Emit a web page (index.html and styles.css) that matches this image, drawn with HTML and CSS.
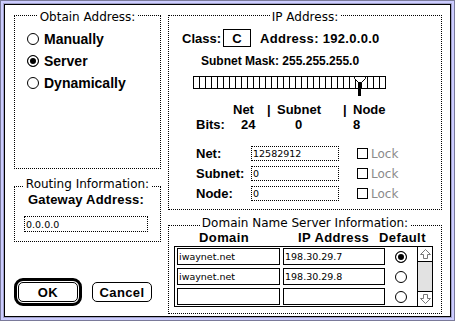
FILE: index.html
```html
<!DOCTYPE html>
<html lang="en">
<head>
  <meta charset="UTF-8">
  <meta name="viewport" content="width=device-width, initial-scale=1">
  <title>MacTCP</title>
  <link rel="stylesheet" href="styles.css">
</head>
<body>
  <div class="window">
    <div class="col-left">
      <div class="group obtain">
        <span class="group-title">Obtain Address:</span>
        <div class="radio-row"><span class="radio"></span>Manually</div>
        <div class="radio-row"><span class="radio on"></span>Server</div>
        <div class="radio-row"><span class="radio"></span>Dynamically</div>
      </div>

      <div class="group routing">
        <span class="group-title low">Routing Information:</span>
        <div class="gateway-label">Gateway Address:</div>
        <div class="field dotted gateway">0.0.0.0</div>
      </div>

      <div class="buttons">
        <div class="btn-default"><div class="btn">OK</div></div>
        <div class="btn">Cancel</div>
      </div>
    </div>

    <div class="col-right">
      <div class="group ip">
        <span class="group-title">IP Address:</span>
        <div class="class-row">
          <span>Class:</span>
          <span class="class-box">C</span>
          <span class="addr-text">Address: 192.0.0.0</span>
        </div>
        <div class="mask-row">Subnet Mask: 255.255.255.0</div>

        <div class="slider">
          <div class="slider-bar"></div>
          <svg class="thumb" width="12" height="20" viewBox="0 0 12 20">
            <polygon points="0.5,0.5 11.5,0.5 11.5,2.5 7.5,6.5 4.5,6.5 0.5,2.5" fill="#fff" stroke="#000" stroke-width="1"/>
            <rect x="4" y="6" width="3" height="14" fill="#000"/>
          </svg>
        </div>

        <div class="bits-head">
          <span class="w-net">Net</span>
          <span class="w-sep">|</span>
          <span class="w-subnet">Subnet</span>
          <span class="w-sep">|</span>
          <span>Node</span>
        </div>
        <div class="bits-row">
          <span class="w-bits">Bits:</span>
          <span class="w-24">24</span>
          <span class="w-0">0</span>
          <span>8</span>
        </div>

        <div class="addr-rows">
          <div class="addr-row">
            <span class="lbl">Net:</span>
            <div class="field dotted addr">12582912</div>
            <span class="check"></span>
            <span class="lock">Lock</span>
          </div>
          <div class="addr-row">
            <span class="lbl">Subnet:</span>
            <div class="field dotted addr">0</div>
            <span class="check"></span>
            <span class="lock">Lock</span>
          </div>
          <div class="addr-row">
            <span class="lbl">Node:</span>
            <div class="field dotted addr">0</div>
            <span class="check"></span>
            <span class="lock">Lock</span>
          </div>
        </div>
      </div>

      <div class="group dns">
        <span class="group-title low">Domain Name Server Information:</span>
        <div class="dns-head">
          <span class="w-domain">Domain</span>
          <span class="w-ip">IP Address</span>
          <span>Default</span>
        </div>
        <div class="dns-table">
          <div class="dns-rows">
            <div class="dns-row">
              <div class="field domain">iwaynet.net</div>
              <div class="field ipaddr">198.30.29.7</div>
              <div class="dns-default"><span class="radio on"></span></div>
            </div>
            <div class="dns-row">
              <div class="field domain">iwaynet.net</div>
              <div class="field ipaddr">198.30.29.8</div>
              <div class="dns-default"><span class="radio"></span></div>
            </div>
            <div class="dns-row">
              <div class="field domain"></div>
              <div class="field ipaddr"></div>
              <div class="dns-default"><span class="radio"></span></div>
            </div>
          </div>
          <div class="scroll">
            <div class="arrow up">
              <svg width="11" height="10" viewBox="0 0 11 10">
                <polygon points="5.5,0.5 10.5,5.5 7.5,5.5 7.5,9.5 3.5,9.5 3.5,5.5 0.5,5.5" fill="#fff" stroke="#777" stroke-width="1"/>
              </svg>
            </div>
            <div class="track"></div>
            <div class="arrow down">
              <svg width="11" height="10" viewBox="0 0 11 10">
                <polygon points="5.5,9.5 10.5,4.5 7.5,4.5 7.5,0.5 3.5,0.5 3.5,4.5 0.5,4.5" fill="#fff" stroke="#777" stroke-width="1"/>
              </svg>
            </div>
          </div>
        </div>
      </div>
    </div>
  </div>
</body>
</html>
```

FILE: styles.css
```css
body {
  margin: 0;
  background: #fff;
  overflow: hidden;
  font-family: 'Liberation Sans', Arial, sans-serif;
  font-weight: bold;
  font-size: 13px;
  color: #000;
}

.window {
  margin: 4px;
  width: 428px;
  height: 299px;
  padding: 10px 8px 2px 9px;
  border: 1px solid #000;
  background: #fff;
  box-shadow: 0 0 0 1px #a0a0c8, 0 0 0 3px #ccccff, 0 0 0 4px #7a7a9a;
  display: grid;
  grid-template-columns: 147px 274px;
  column-gap: 7px;
  align-items: start;
}

.col-left,
.col-right {
  display: flex;
  flex-direction: column;
}

/* group boxes */
.group {
  position: relative;
  border: 1px dotted #000;
  box-sizing: border-box;
}

.group-title {
  position: absolute;
  top: -5px;
  left: 0;
  right: 0;
  margin: 0 auto;
  width: fit-content;
  padding: 0 2px;
  background: #fff;
  font-family: 'DejaVu Sans', sans-serif;
  font-weight: normal;
  font-size: 12px;
  line-height: 12px;
  white-space: nowrap;
}

.group-title.low {
  top: -9px;
}

/* obtain address */
.obtain {
  height: 154px;
  padding-top: 12px;
}

.radio-row {
  display: flex;
  align-items: center;
  height: 22px;
  padding-left: 12px;
  font-size: 14px;
}

.radio {
  width: 12px;
  height: 12px;
  flex: none;
  box-sizing: border-box;
  border: 1px solid #000;
  border-radius: 50%;
  background: #fff;
  margin-right: 5px;
}

.radio.on {
  background: #000;
  box-shadow: inset 0 0 0 2px #fff;
}

/* routing */
.routing {
  margin-top: 17px;
  height: 56px;
  padding: 5px 12px 9px 9px;
}

.gateway-label {
  text-align: center;
  line-height: 15px;
  letter-spacing: 0.2px;
}

.field {
  box-sizing: border-box;
  border: 1px solid #000;
  background: #fff;
  display: flex;
  align-items: center;
  padding-left: 1px;
  font-family: 'DejaVu Sans', sans-serif;
  font-weight: normal;
  font-size: 9.5px;
  white-space: nowrap;
  overflow: hidden;
}

.field.dotted {
  border-style: dotted;
}

.gateway {
  margin-top: 9px;
  height: 16px;
}

/* buttons */
.buttons {
  margin-top: 36px;
  display: flex;
  align-items: center;
  gap: 10px;
}

.btn-default {
  border: 3px solid #000;
  border-radius: 9px;
  padding: 1px;
}

.btn {
  width: 60px;
  height: 20px;
  box-sizing: border-box;
  border: 1px solid #000;
  border-radius: 5px;
  display: flex;
  align-items: center;
  justify-content: center;
  font-size: 13px;
  letter-spacing: 0.4px;
}

/* ip address */
.ip {
  height: 195px;
  padding-top: 13px;
}

.class-row {
  display: flex;
  align-items: center;
  height: 18px;
  padding-left: 13px;
}

.class-box {
  width: 28px;
  height: 18px;
  box-sizing: border-box;
  border: 1px solid #000;
  margin: 0 9px 0 2px;
  display: flex;
  align-items: center;
  justify-content: center;
}

.addr-text {
  letter-spacing: 0.3px;
}

.mask-row {
  margin-top: 7px;
  padding-left: 32px;
  font-size: 12px;
  line-height: 15px;
}

.slider {
  position: relative;
  margin: 7px 0 0 24px;
  width: 193px;
  height: 20px;
}

.slider-bar {
  margin-top: 7px;
  height: 13px;
  box-sizing: border-box;
  border-top: 1px solid #000;
  border-bottom: 1px solid #000;
  background: linear-gradient(to right, #000 1px, transparent 1px) 0 0 / 6px 100% repeat-x;
}

.thumb {
  position: absolute;
  top: 0;
  left: 161px;
}

.bits-head,
.bits-row {
  display: flex;
  line-height: 15px;
}

.bits-head {
  margin-top: 6px;
  padding-left: 64px;
}

.bits-row {
  padding-left: 27px;
}

.w-net { width: 34px; }
.w-sep { width: 10px; }
.w-subnet { width: 66px; }
.w-bits { width: 45px; }
.w-24 { width: 54px; }
.w-0 { width: 58px; }

.addr-rows {
  margin-top: 14px;
  display: flex;
  flex-direction: column;
  gap: 5px;
}

.addr-row {
  display: flex;
  align-items: center;
  height: 15px;
  padding-left: 27px;
}

.addr-row .lbl {
  width: 55px;
}

.field.addr {
  width: 88px;
  height: 15px;
}

.check {
  width: 11px;
  height: 11px;
  box-sizing: border-box;
  border: 1px solid #000;
  margin-left: 18px;
}

.lock {
  margin-left: 3px;
  font-family: 'DejaVu Sans', sans-serif;
  font-weight: normal;
  font-size: 12px;
  color: #8a8a8a;
}

/* domain name servers */
.dns {
  margin-top: 15px;
  height: 89px;
  padding: 4px 0 0 5px;
}

.dns-head {
  display: flex;
  line-height: 15px;
  padding-left: 25px;
  letter-spacing: 0.4px;
}

.w-domain { width: 99px; }
.w-ip { width: 81px; }

.dns-table {
  margin-top: 1px;
  width: 259px;
  height: 61px;
  box-sizing: border-box;
  border: 1px solid #000;
  display: flex;
}

.dns-rows {
  flex: 1;
  padding: 1px 0 1px 2px;
  display: flex;
  flex-direction: column;
  gap: 3px;
}

.dns-row {
  display: flex;
  height: 17px;
}

.field.domain {
  width: 103px;
  margin-right: 3px;
}

.field.ipaddr {
  width: 102px;
}

.dns-default {
  flex: 1;
  display: flex;
  align-items: center;
  justify-content: center;
}

.dns-default .radio {
  margin: 0;
}

.scroll {
  width: 15px;
  box-sizing: border-box;
  border-left: 1px solid #000;
  display: flex;
  flex-direction: column;
  background: #e2e2e2;
}

.arrow {
  height: 15px;
  box-sizing: border-box;
  background: #fff;
  display: flex;
  align-items: center;
  justify-content: center;
}

.arrow.up {
  border-bottom: 1px solid #000;
}

.arrow.down {
  border-top: 1px solid #000;
}

.track {
  flex: 1;
}
```
